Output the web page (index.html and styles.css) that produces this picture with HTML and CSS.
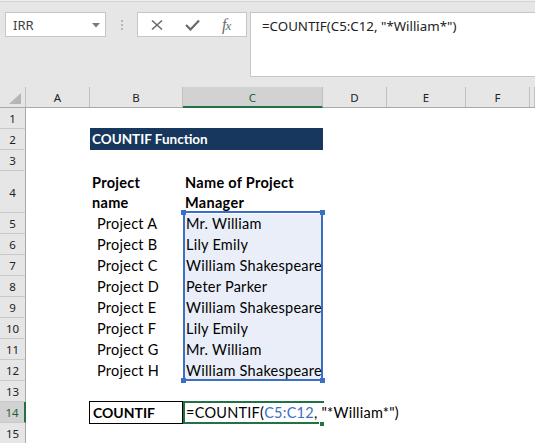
FILE: index.html
```html
<!DOCTYPE html>
<html>
<head>
<meta charset="utf-8">
<link rel="stylesheet" href="styles.css">
</head>
<body>
<div class="toolbar">
  <div class="namebox">
    <span class="namebox-text">IRR</span>
    <svg class="dropdown" width="8" height="5" viewBox="0 0 8 5"><path d="M0 0H8L4 4.5Z" fill="#7a7a7a"/></svg>
  </div>
  <div class="grip"><i></i><i></i><i></i></div>
  <div class="btns">
    <svg class="ico" width="14" height="12" viewBox="0 0 14 12"><path d="M2 1.5L12 10.5M12 1.5L2 10.5" stroke="#6a6a6a" stroke-width="1.6" fill="none"/></svg>
    <svg class="ico" width="15" height="12" viewBox="0 0 15 12"><path d="M1 6L5.5 10.5L14 1.5" stroke="#6a6a6a" stroke-width="2.2" fill="none"/></svg>
    <span class="fx">f<span class="fx-x">x</span></span>
  </div>
  <div class="formula">=COUNTIF(C5:C12, "*William*")</div>
</div>

<div class="sheet">
  <div class="row hdr">
    <div class="corner"><span class="corner-tri"></span></div>
    <div class="ch">A</div>
    <div class="ch">B</div>
    <div class="ch ch-active">C</div>
    <div class="ch">D</div>
    <div class="ch">E</div>
    <div class="ch">F</div>
    <div class="ch"></div>
  </div>

  <div class="row"><div class="rh">1</div></div>
  <div class="row">
    <div class="rh">2</div>
    <div class="cell"></div>
    <div class="cell banner">COUNTIF Function</div>
  </div>
  <div class="row"><div class="rh">3</div></div>
  <div class="row tall">
    <div class="rh">4</div>
    <div class="cell"></div>
    <div class="cell bold wrap">Project<br>name</div>
    <div class="cell bold wrap">Name of Project<br>Manager</div>
  </div>

  <div class="row"><div class="rh">5</div><div class="cell"></div><div class="cell proj">Project A</div><div class="cell sel sel-top"><span class="handle h-tl"></span><span class="handle h-tr"></span>Mr. William</div></div>
  <div class="row"><div class="rh">6</div><div class="cell"></div><div class="cell proj">Project B</div><div class="cell sel">Lily Emily</div></div>
  <div class="row"><div class="rh">7</div><div class="cell"></div><div class="cell proj">Project C</div><div class="cell sel">William Shakespeare</div></div>
  <div class="row"><div class="rh">8</div><div class="cell"></div><div class="cell proj">Project D</div><div class="cell sel">Peter Parker</div></div>
  <div class="row"><div class="rh">9</div><div class="cell"></div><div class="cell proj">Project E</div><div class="cell sel">William Shakespeare</div></div>
  <div class="row"><div class="rh">10</div><div class="cell"></div><div class="cell proj">Project F</div><div class="cell sel">Lily Emily</div></div>
  <div class="row"><div class="rh">11</div><div class="cell"></div><div class="cell proj">Project G</div><div class="cell sel">Mr. William</div></div>
  <div class="row"><div class="rh">12</div><div class="cell"></div><div class="cell proj">Project H</div><div class="cell sel sel-bottom"><span class="handle h-bl"></span><span class="handle h-br"></span>William Shakespeare</div></div>

  <div class="row"><div class="rh">13</div></div>
  <div class="row">
    <div class="rh rh-active">14</div>
    <div class="cell"></div>
    <div class="cell bold boxed">COUNTIF</div>
    <div class="cell active">=COUNTIF(<span class="ref">C5:C12</span>, "*William*")<span class="caret"></span><span class="fill-handle"></span></div>
  </div>
  <div class="row"><div class="rh">15</div></div>
</div>
</body>
</html>
```

FILE: styles.css
```css
* { box-sizing: border-box; }

html, body {
  margin: 0;
  padding: 0;
}

body {
  width: 535px;
  height: 443px;
  overflow: hidden;
  background: #ffffff;
  font-family: "Lato", "Liberation Sans", sans-serif;
  color: #000;
}

/* ---------- toolbar ---------- */
.toolbar {
  height: 87px;
  display: flex;
  align-items: flex-start;
  padding: 12px 0 0 5px;
  background: linear-gradient(#eeeeee 0 1px, #d3d3d3 1px 2px, #e6e6e6 2px);
}

.namebox {
  width: 101px;
  height: 25px;
  flex: none;
  background: #fff;
  border: 1px solid #c6c6c6;
  display: flex;
  align-items: center;
  justify-content: space-between;
  padding: 0 5px 0 7px;
}

.namebox-text {
  font-family: "Noto Sans", "Open Sans", sans-serif;
  font-size: 13px;
  color: #3f3f3f;
}

.dropdown { margin-top: 1px; }

.grip {
  width: 31px;
  flex: none;
  display: flex;
  flex-direction: column;
  align-items: center;
  gap: 2px;
  padding-top: 8px;
}

.grip i {
  display: block;
  width: 2px;
  height: 2px;
  background: #b4b4b4;
}

.btns {
  width: 110px;
  height: 25px;
  flex: none;
  background: #fff;
  border: 1px solid #c6c6c6;
  display: flex;
  align-items: center;
  padding-left: 12px;
  gap: 21px;
}

.fx {
  font-family: "Liberation Serif", serif;
  font-style: italic;
  font-size: 16px;
  color: #6a6a6a;
  margin-left: 1px;
  letter-spacing: -1px;
}

.fx-x { font-size: 13px; }

.formula {
  flex: 1;
  margin-left: 3px;
  height: 65px;
  background: #fff;
  border: 1px solid #c6c6c6;
  border-right: none;
  padding: 4px 0 0 11px;
  font-family: "Noto Sans", "Open Sans", sans-serif;
  font-size: 13.3px;
  color: #222;
  white-space: nowrap;
}

/* ---------- sheet ---------- */
.sheet {
  display: flex;
  flex-direction: column;
}

.row {
  display: grid;
  grid-template-columns: 26px 64px 93px 140px 64px 79px 64px 5px;
  height: 21px;
}

.row.tall { height: 42px; }

.hdr {
  height: 21px;
  background: #e6e6e6;
  border-bottom: 1px solid #a9a9a9;
}

.corner {
  position: relative;
  border-right: 1px solid #c0c0c0;
}

.corner-tri {
  position: absolute;
  right: 4px;
  bottom: 3px;
  width: 12px;
  height: 11px;
  background: #b5b5b5;
  clip-path: polygon(100% 0, 100% 100%, 0 100%);
}

.ch {
  border-right: 1px solid #c0c0c0;
  display: flex;
  align-items: center;
  justify-content: center;
  font-family: "Noto Sans", "Open Sans", sans-serif;
  font-size: 11.5px;
  color: #222;
  padding-top: 1px;
}

.ch-active {
  background: #d2d2d2;
  color: #1d5e38;
  border-bottom: 2px solid #217346;
  margin-bottom: -1px;
}

.rh {
  background: #e6e6e6;
  border-right: 1px solid #a9a9a9;
  border-bottom: 1px solid #c9c9c9;
  display: flex;
  align-items: center;
  justify-content: center;
  font-family: "Noto Sans", "Open Sans", sans-serif;
  font-size: 11.5px;
  color: #222;
  padding-top: 1px;
}

.rh-active {
  background: #d2d2d2;
  color: #1d5e38;
  border-right: 2px solid #217346;
}

.cell {
  font-size: 14.5px;
  letter-spacing: 0.25px;
  line-height: 20px;
  padding-left: 3px;
  display: flex;
  align-items: flex-end;
  white-space: nowrap;
  position: relative;
}

.bold { font-weight: bold; }

.wrap {
  flex-direction: column;
  justify-content: flex-end;
  align-items: flex-start;
  padding-left: 2px;
  letter-spacing: 0.3px;
}

.banner {
  grid-column: span 2;
  background: #17375e;
  color: #fff;
  font-weight: bold;
  font-size: 13.5px;
  letter-spacing: 0;
  padding-left: 2px;
  align-items: center;
  margin-top: -1px;
  height: 22px;
}

.proj { padding-left: 7px; }

.sel {
  background: #e9eef8;
  box-shadow: inset 2px 0 #3a6fc4, inset -2px 0 #3a6fc4;
  padding-left: 3px;
}

.sel-top {
  box-shadow: inset 2px 0 #3a6fc4, inset -2px 0 #3a6fc4, 0 -2px 0 0 #3a6fc4;
  background: linear-gradient(#ffffff 0 1px, #e9eef8 1px);
}

.sel-bottom {
  box-shadow: inset 2px 0 #3a6fc4, inset -2px 0 #3a6fc4, inset 0 -2px #3a6fc4;
}

.handle {
  position: absolute;
  width: 5px;
  height: 5px;
  background: #3a6fc4;
  z-index: 2;
}

.h-tl { left: -2px; top: -3px; }
.h-tr { right: -2px; top: -3px; }
.h-bl { left: -2px; bottom: -2px; }
.h-br { right: -2px; bottom: -2px; }

.boxed {
  font-size: 14px;
  letter-spacing: 0;
}

.boxed::before {
  content: "";
  position: absolute;
  left: -1px;
  top: -1px;
  right: 0;
  bottom: -1px;
  border: 1px solid #000;
}

.active {
  padding-left: 3px;
  overflow: visible;
}

.active::before {
  content: "";
  position: absolute;
  left: 0;
  top: -1px;
  right: -1px;
  bottom: -1px;
  border: 2px solid #217346;
  border-right: none;
}

.ref { color: #3a6fc4; }

.caret {
  display: inline-block;
  width: 2px;
  height: 15px;
  background: #111;
  margin: 0 0 2px 2px;
  align-self: flex-end;
}

.fill-handle {
  position: absolute;
  right: -1px;
  bottom: -3px;
  width: 5px;
  height: 4px;
  background: #217346;
  border-left: 1px solid #fff;
}
```
